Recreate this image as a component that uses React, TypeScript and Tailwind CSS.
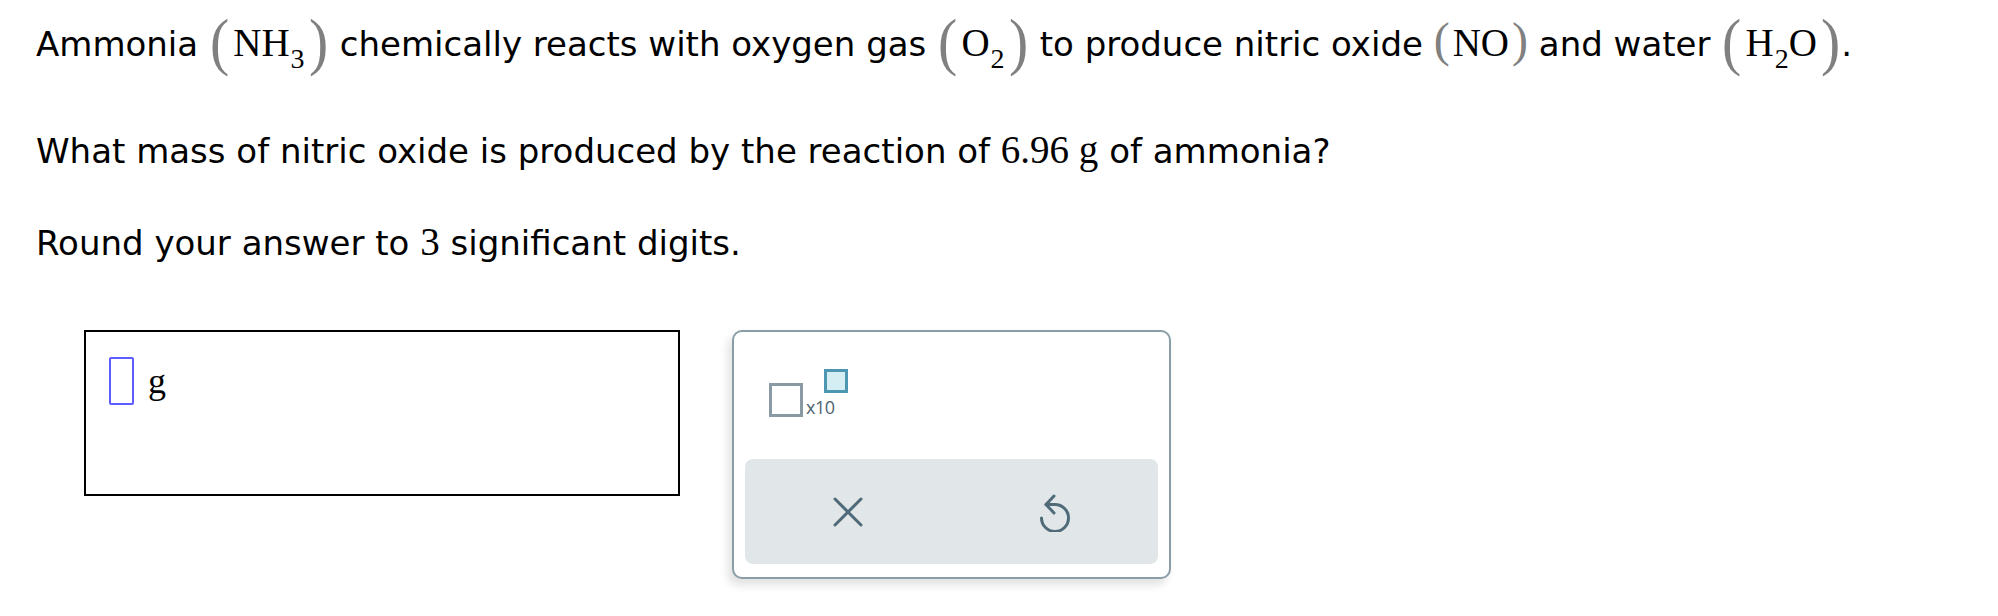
import React from 'react';

const serif = "font-['Liberation_Serif','Times_New_Roman',serif]";

function Paren({ ch, tall }: { ch: string; tall?: boolean }) {
  return tall ? (
    <span className={`${serif} inline-block text-[64px] leading-none align-[-7px] text-[#808080] scale-x-90`}>{ch}</span>
  ) : (
    <span className={`${serif} inline-block text-[48px] leading-none text-[#808080]`}>{ch}</span>
  );
}

function Sub({ children }: { children: React.ReactNode }) {
  return <span className="text-[28px] align-[-12px] pl-[1px]">{children}</span>;
}

function Formula({ children, tall }: { children: React.ReactNode; tall?: boolean }) {
  return (
    <span className="whitespace-nowrap">
      <Paren ch="(" tall={tall} />
      <span className={`${serif} text-[39px] px-[3px]`}>{children}</span>
      <Paren ch=")" tall={tall} />
    </span>
  );
}

function ResetIcon() {
  return (
    <svg width="40" height="40" viewBox="0 0 40 40" fill="none" stroke="#4f6a78" strokeWidth="3" strokeLinecap="round" strokeLinejoin="round">
      <path d="M19 4 L11 12.5 L19 21" />
      <path d="M11 12.5 H20 A13.5 13.5 0 1 1 6.5 26" />
    </svg>
  );
}

function CloseIcon() {
  return (
    <svg width="32" height="32" viewBox="0 0 32 32" fill="none" stroke="#4f6a78" strokeWidth="3" strokeLinecap="round">
      <path d="M3 3 L29 29 M29 3 L3 29" />
    </svg>
  );
}

export default function App() {
  return (
    <div className="w-[1998px] h-[616px] bg-white text-black pl-[36px] pt-[3px] font-['DejaVu_Sans',Verdana,sans-serif] text-[34px]">
      <p className="leading-[80px] whitespace-nowrap">
        Ammonia{' '}
        <Formula tall>
          NH<Sub>3</Sub>
        </Formula>{' '}
        chemically reacts with oxygen gas{' '}
        <Formula tall>
          O<Sub>2</Sub>
        </Formula>{' '}
        to produce nitric oxide <Formula>NO</Formula> and water{' '}
        <Formula tall>
          H<Sub>2</Sub>O
        </Formula>
        .
      </p>

      <p className="mt-[27px] leading-[48px] whitespace-nowrap">
        What mass of nitric oxide is produced by the reaction of{' '}
        <span className={`${serif} text-[39px]`}>6.96 g</span> of ammonia?
      </p>

      <p className="mt-[43px] leading-[48px] whitespace-nowrap">
        Round your answer to <span className={`${serif} text-[39px]`}>3</span> significant digits.
      </p>

      <div className="mt-[63px] ml-[48px] flex items-start">
        {/* answer field */}
        <div className="w-[596px] h-[166px] border-2 border-black pl-[23px] pt-[25px]">
          <div className="flex items-center gap-[14px]">
            <div className="w-[25px] h-[48px] border-2 border-[#5c5cff] rounded-[2px]" />
            <span className={`${serif} text-[36px] leading-none`}>g</span>
          </div>
        </div>

        {/* keypad */}
        <div className="ml-[52px] w-[439px] h-[249px] border-2 border-[#8a9ea8] rounded-[10px] bg-white shadow-[-4px_6px_10px_rgba(0,0,0,0.12)] flex flex-col">
          <div className="h-[127px] pl-[35px] pt-[37px]">
            <div className="flex h-[48px]">
              <div className="self-end w-[34px] h-[34px] border-[3px] border-[#8a9aa2]" />
              <span className="self-end ml-[3px] mb-[1px] text-[18px] leading-none tracking-[-0.5px] text-[#4f6470] font-['Open_Sans',sans-serif]">x10</span>
              <div className="self-start -ml-[11px] w-[24px] h-[24px] border-[3px] border-[#4e97b3] bg-[#d5eef4]" />
            </div>
          </div>
          <div className="mx-[11px] h-[105px] rounded-[8px] bg-[#e1e6e9] flex">
            <div className="flex-1 flex items-center justify-center">
              <CloseIcon />
            </div>
            <div className="flex-1 flex items-center justify-center">
              <ResetIcon />
            </div>
          </div>
        </div>
      </div>
    </div>
  );
}
